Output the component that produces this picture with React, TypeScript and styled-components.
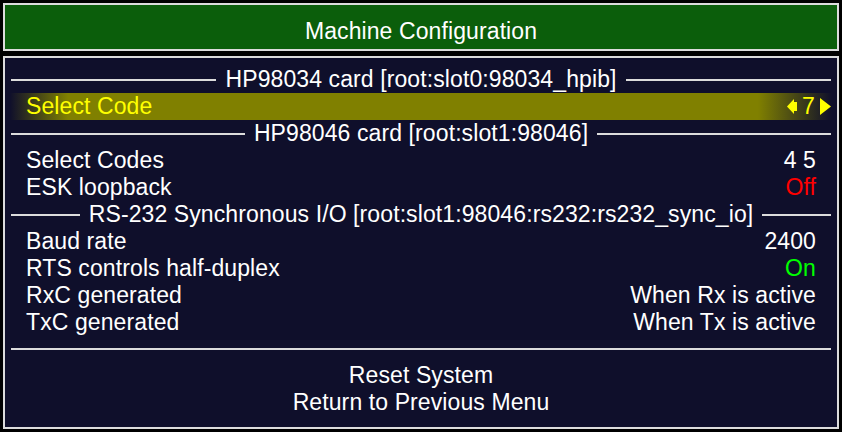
import styled, { createGlobalStyle } from 'styled-components'

const GlobalStyle = createGlobalStyle`
  html, body {
    margin: 0;
    padding: 0;
    background: #000000;
  }
  body {
    font-family: 'Liberation Sans', Arial, sans-serif;
  }
`

type Tone = 'normal' | 'off' | 'on'

interface Setting {
  label: string;
  value: string;
  tone?: Tone;
}

interface Section {
  title: string;
  settings: Setting[];
}

const sections: Section[] = [
  {
    title: 'HP98034 card [root:slot0:98034_hpib]',
    settings: [{ label: 'Select Code', value: '7' }],
  },
  {
    title: 'HP98046 card [root:slot1:98046]',
    settings: [
      { label: 'Select Codes', value: '4 5' },
      { label: 'ESK loopback', value: 'Off', tone: 'off' },
    ],
  },
  {
    title: 'RS-232 Synchronous I/O [root:slot1:98046:rs232:rs232_sync_io]',
    settings: [
      { label: 'Baud rate', value: '2400' },
      { label: 'RTS controls half-duplex', value: 'On', tone: 'on' },
      { label: 'RxC generated', value: 'When Rx is active' },
      { label: 'TxC generated', value: 'When Tx is active' },
    ],
  },
]

// left arrow: triangle with a short stem on its right side
const LeftArrow = () => (
  <svg width="10" height="17" viewBox="0 0 10 17">
    <polygon points="0,8.5 7,1 7,16" fill="#ffff00" />
    <rect x="7" y="4" width="3" height="9" fill="#ffff00" />
  </svg>
)

const RightArrow = () => (
  <svg width="11" height="17" viewBox="0 0 11 17">
    <polygon points="0,0 11,8.5 0,17" fill="#ffff00" />
  </svg>
)

const App = () => {
  return (
    <>
      <GlobalStyle />
      <Screen>
        <TitleBar>Machine Configuration</TitleBar>
        <Panel>
          {sections.map((section) => (
            <div key={section.title}>
              <HeaderRow>
                <Rule />
                <HeaderText>{section.title}</HeaderText>
                <Rule />
              </HeaderRow>
              {section.settings.map((s) => {
                const selected = s.label === 'Select Code'
                return (
                  <ItemRow key={s.label} selected={selected}>
                    <span>{s.label}</span>
                    {selected ? (
                      <Spinner>
                        <LeftArrow />
                        <span>{s.value}</span>
                        <RightArrow />
                      </Spinner>
                    ) : (
                      <Value tone={s.tone || 'normal'}>{s.value}</Value>
                    )}
                  </ItemRow>
                )
              })}
            </div>
          ))}
          <Divider />
          <ActionRow>Reset System</ActionRow>
          <ActionRow>Return to Previous Menu</ActionRow>
        </Panel>
      </Screen>
    </>
  )
}

export default App

const Screen = styled.div`
  width: 842px;
  height: 432px;
  box-sizing: border-box;
  padding: 3px;
  display: flex;
  flex-direction: column;
  gap: 5px;
  color: #ffffff;
  font-size: 23px;
  letter-spacing: 0.1px;
`

const TitleBar = styled.div`
  height: 48px;
  box-sizing: border-box;
  border: 2px solid #dcdcdc;
  background: #0b5e0b;
  display: flex;
  align-items: center;
  justify-content: center;
  padding-top: 9px;
`

const Panel = styled.div`
  flex: 1;
  box-sizing: border-box;
  border: 2px solid #dcdcdc;
  background: #0f0f2b;
  padding: 8px 5px 11px 5px;
  display: flex;
  flex-direction: column;
`

const HeaderRow = styled.div`
  height: 27px;
  display: flex;
  align-items: center;
  gap: 9px;
  padding: 0 1px;
`

const Rule = styled.div`
  flex: 1;
  height: 2px;
  background: #dcdcdc;
`

const HeaderText = styled.span`
  line-height: 27px;
  white-space: nowrap;
`

interface ItemRowProps {
  selected?: boolean;
}

const ItemRow = styled.div<ItemRowProps>`
  height: 27px;
  line-height: 27px;
  display: flex;
  justify-content: space-between;
  align-items: center;
  padding: ${props => props.selected ? '0 1px 0 16px' : '0 16px'};
  color: ${props => props.selected ? '#ffff00' : '#ffffff'};
  background: ${props => props.selected
    ? 'linear-gradient(90deg, rgba(128,128,0,0) 0px, #808000 58px, #808000 calc(100% - 74px), rgba(128,128,0,0) 100%)'
    : 'transparent'};
  white-space: nowrap;
`

const Spinner = styled.span`
  display: flex;
  align-items: center;
  gap: 5px;
`

interface ValueProps {
  tone: Tone;
}

const Value = styled.span<ValueProps>`
  color: ${props => props.tone === 'off' ? '#ff0000' : props.tone === 'on' ? '#00ff00' : '#ffffff'};
`

const Divider = styled.div`
  height: 2px;
  background: #dcdcdc;
  margin: 12px 1px 12px 1px;
`

const ActionRow = styled.div`
  height: 27px;
  line-height: 27px;
  text-align: center;
`
